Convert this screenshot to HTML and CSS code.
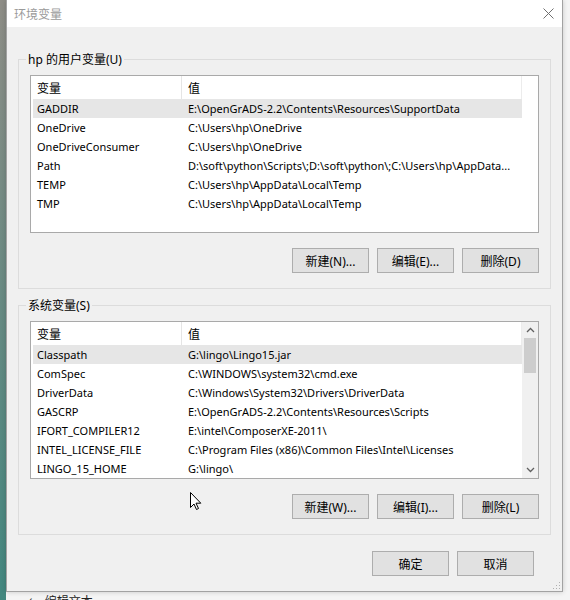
FILE: index.html
```html
<!DOCTYPE html>
<html lang="zh-CN">

<head>
    <meta charset="UTF-8">
    <title>环境变量</title>
    <link rel="stylesheet" href="styles.css">
</head>

<body>
    <div class="screen">
        <div class="desk-left"></div>

        <div class="stage">
            <div class="window">
                <div class="titlebar">
                    <span class="title">环境变量</span>
                    <span class="close">
                        <svg width="11" height="11" viewBox="0 0 11 11">
                            <path d="M0.5 0.5 L10.5 10.5 M10.5 0.5 L0.5 10.5" stroke="#6f6f6f" stroke-width="1" fill="none"/>
                        </svg>
                    </span>
                </div>

                <div class="client">
                    <!-- 用户变量 -->
                    <fieldset class="group">
                        <legend>hp 的用户变量(U)</legend>
                        <div class="list">
                            <div class="list-main">
                                <div class="head">
                                    <div class="c1">变量</div>
                                    <div class="c2">值</div>
                                </div>
                                <div class="row sel"><div class="c1">GADDIR</div><div class="c2">E:\OpenGrADS-2.2\Contents\Resources\SupportData</div></div>
                                <div class="row"><div class="c1">OneDrive</div><div class="c2">C:\Users\hp\OneDrive</div></div>
                                <div class="row"><div class="c1">OneDriveConsumer</div><div class="c2">C:\Users\hp\OneDrive</div></div>
                                <div class="row"><div class="c1">Path</div><div class="c2">D:\soft\python\Scripts\;D:\soft\python\;C:\Users\hp\AppData...</div></div>
                                <div class="row"><div class="c1">TEMP</div><div class="c2">C:\Users\hp\AppData\Local\Temp</div></div>
                                <div class="row"><div class="c1">TMP</div><div class="c2">C:\Users\hp\AppData\Local\Temp</div></div>
                            </div>
                        </div>
                        <div class="buttons">
                            <button>新建(N)...</button>
                            <button>编辑(E)...</button>
                            <button>删除(D)</button>
                        </div>
                    </fieldset>

                    <!-- 系统变量 -->
                    <fieldset class="group">
                        <legend>系统变量(S)</legend>
                        <div class="list">
                            <div class="list-main">
                                <div class="head">
                                    <div class="c1">变量</div>
                                    <div class="c2">值</div>
                                </div>
                                <div class="row sel"><div class="c1">Classpath</div><div class="c2">G:\lingo\Lingo15.jar</div></div>
                                <div class="row"><div class="c1">ComSpec</div><div class="c2">C:\WINDOWS\system32\cmd.exe</div></div>
                                <div class="row"><div class="c1">DriverData</div><div class="c2">C:\Windows\System32\Drivers\DriverData</div></div>
                                <div class="row"><div class="c1">GASCRP</div><div class="c2">E:\OpenGrADS-2.2\Contents\Resources\Scripts</div></div>
                                <div class="row"><div class="c1">IFORT_COMPILER12</div><div class="c2">E:\intel\ComposerXE-2011\</div></div>
                                <div class="row"><div class="c1">INTEL_LICENSE_FILE</div><div class="c2">C:\Program Files (x86)\Common Files\Intel\Licenses</div></div>
                                <div class="row"><div class="c1">LINGO_15_HOME</div><div class="c2">G:\lingo\</div></div>
                            </div>
                            <div class="scroll">
                                <div class="arrow">
                                    <svg width="9" height="6" viewBox="0 0 9 6"><path d="M1 5 L4.5 1.5 L8 5" stroke="#606060" stroke-width="1.3" fill="none"/></svg>
                                </div>
                                <div class="thumb"></div>
                                <div class="arrow down">
                                    <svg width="9" height="6" viewBox="0 0 9 6"><path d="M1 1 L4.5 4.5 L8 1" stroke="#606060" stroke-width="1.3" fill="none"/></svg>
                                </div>
                            </div>
                        </div>
                        <div class="buttons">
                            <button>新建(W)...</button>
                            <button>编辑(I)...</button>
                            <button>删除(L)</button>
                        </div>
                    </fieldset>

                    <div class="buttons dialog">
                        <button>确定</button>
                        <button>取消</button>
                    </div>
                </div>

                <!-- 右下角的拖动柄 -->
                <svg class="grip" width="9" height="9" viewBox="0 0 9 9">
                    <rect x="7" y="1" width="1" height="1" fill="#b0b0b0"/>
                    <rect x="4" y="4" width="1" height="1" fill="#b0b0b0"/>
                    <rect x="7" y="4" width="1" height="1" fill="#b0b0b0"/>
                    <rect x="1" y="7" width="1" height="1" fill="#b0b0b0"/>
                    <rect x="4" y="7" width="1" height="1" fill="#b0b0b0"/>
                    <rect x="7" y="7" width="1" height="1" fill="#b0b0b0"/>
                </svg>
            </div>

            <div class="taskline">
                <span class="pen">✓</span>
                <span>编辑文本</span>
            </div>
        </div>

        <svg class="cursor" width="12" height="19" viewBox="0 0 12 19">
            <path d="M0.5 0.5 L0.5 15.5 L4 12 L6.5 17.5 L8.5 16.5 L6 11.2 L10.8 11.2 Z" fill="#fff" stroke="#000" stroke-width="1" stroke-linejoin="round"/>
        </svg>
    </div>
</body>

</html>
```

FILE: styles.css
```css
* {
    box-sizing: border-box;
}

body {
    margin: 0;
    font-family: "Noto Sans", "Noto Sans CJK SC", sans-serif;
    font-size: 11px;
    color: #000;
    background-color: #f4f4f4;
}

.screen {
    position: relative;
    display: flex;
    width: 570px;
    height: 600px;
    overflow: hidden;
}

.desk-left {
    flex: none;
    width: 6px;
    background: linear-gradient(#8e8d86, #42877f);
}

.stage {
    display: flex;
    flex-direction: column;
    width: 557px;
}

/* 对话框 */
.window {
    position: relative;
    flex: none;
    height: 592px;
    display: flex;
    flex-direction: column;
    border: 1px solid #a2a2a2;
    border-top: none;
    box-shadow: 0 0 5px rgba(0, 0, 0, 0.18);
}

.titlebar {
    flex: none;
    height: 27px;
    display: flex;
    align-items: center;
    justify-content: space-between;
    padding: 0 8px 0 7px;
    background-color: #fff;
}

.title {
    font-size: 12px;
    color: #9a9a9a;
}

.close {
    display: flex;
}

.client {
    flex: 1;
    display: flex;
    flex-direction: column;
    padding: 24px 11px 0;
    background-color: #f0f0f0;
}

.group {
    margin: 0;
    min-width: 0;
    padding: 7px 11px 15px;
    border: 1px solid #dcdcdc;
}

.group + .group {
    margin-top: 8px;
}

.group legend {
    margin-left: -4px;
    padding: 0 2px;
    font-size: 12px;
    line-height: 17px;
}

/* 列表 */
.list {
    display: flex;
    height: 158px;
    border: 1px solid #a9a9a9;
    background-color: #fff;
}

.list-main {
    flex: 1;
    min-width: 0;
}

.head {
    display: flex;
    width: 491px;
    height: 23px;
    font-size: 12px;
}

.head div {
    display: flex;
    align-items: center;
}

.head .c1 {
    width: 151px;
    padding-left: 6px;
    border-right: 1px solid #e5e5e5;
}

.head .c2 {
    flex: 1;
    padding-left: 6px;
    border-right: 1px solid #ececec;
}

.row {
    display: flex;
    align-items: center;
    width: 489px;
    height: 19px;
    margin-left: 2px;
    white-space: nowrap;
}

.row.sel {
    background-color: #e6e6e6;
}

.row .c1 {
    flex: none;
    width: 149px;
    padding-left: 4px;
}

.row .c2 {
    flex: 1;
    min-width: 0;
    padding-left: 6px;
    overflow: hidden;
    text-overflow: ellipsis;
}

.scroll {
    flex: none;
    width: 16px;
    display: flex;
    flex-direction: column;
    align-items: center;
    background-color: #f0f0f0;
}

.arrow {
    height: 16px;
    display: flex;
    align-items: center;
    justify-content: center;
}

.arrow.down {
    margin-top: auto;
}

.thumb {
    width: 12px;
    height: 35px;
    background-color: #cdcdcd;
}

/* 按钮 */
.buttons {
    display: flex;
    justify-content: flex-end;
    gap: 8px;
    margin-top: 15px;
}

.buttons.dialog {
    margin-top: 16px;
    padding-right: 17px;
}

button {
    width: 77px;
    height: 25px;
    padding: 0;
    border: 1px solid #adadad;
    background-color: #e1e1e1;
    font-family: inherit;
    font-size: 12px;
    color: #000;
}

.grip {
    position: absolute;
    right: 1px;
    bottom: 1px;
}

/* 窗口下面露出的一点内容 */
.taskline {
    display: flex;
    gap: 13px;
    padding: 2px 0 0 19px;
    font-size: 12px;
    line-height: 16px;
    color: #222;
}

.pen {
    font-size: 10px;
}

.cursor {
    position: absolute;
    left: 190px;
    top: 492px;
}
```
